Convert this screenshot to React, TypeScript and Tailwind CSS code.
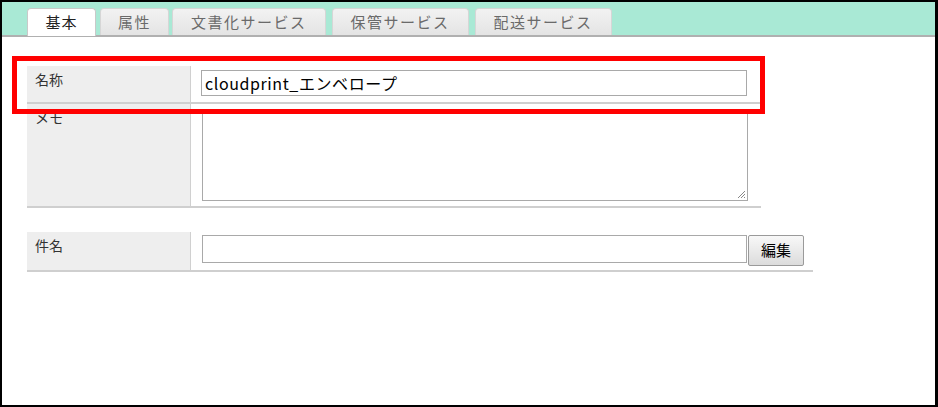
const font = { fontFamily: '"Noto Sans CJK JP", "Noto Sans", sans-serif' };

const tabs = ["基本", "属性", "文書化サービス", "保管サービス", "配送サービス"];

function Tab({ label, active, wide }: { label: string; active?: boolean; wide?: boolean }) {
  if (active) {
    return (
      <div className="-mb-px flex h-[28px] w-[69px] items-center justify-center rounded-t-[4px] border border-b-0 border-[#c9c9c9] bg-white text-[15px] tracking-[1px] text-[#222]">
        {label}
      </div>
    );
  }
  return (
    <div
      className={`flex h-[27px] items-center justify-center rounded-t-[4px] border border-b-0 border-[#d6d6d6] bg-gradient-to-b from-[#f2f2f2] to-[#e4e4e4] text-[15px] tracking-[1.5px] text-[#6a6a6a] ${
        wide ? "px-[18px]" : "px-[17px]"
      }`}
    >
      {label}
    </div>
  );
}

function Row({
  label,
  children,
  className,
}: {
  label: string;
  children: React.ReactNode;
  className?: string;
}) {
  return (
    <div className={`flex border-b-2 border-[#cfcfcf] ${className ?? ""}`}>
      <div className="w-[164px] shrink-0 border-r border-[#d0d0d0] bg-[#eeeeee] px-[8px] pt-[3px] text-[14px] text-[#333]">
        {label}
      </div>
      <div className="flex-1">{children}</div>
    </div>
  );
}

export default function App() {
  return (
    <div
      className="relative box-border h-[407px] w-[938px] overflow-hidden border-2 border-r-[3px] border-black bg-white"
      style={font}
    >
      <div className="flex h-[35px] items-end gap-[4px] border-b-2 border-[#b0b0b0] bg-[#a9e9d5] pl-[25px]">
        <Tab label={tabs[0]} active />
        <Tab label={tabs[1]} />
        <div className="ml-[-1px] flex gap-[6px]">
          <Tab label={tabs[2]} wide />
          <Tab label={tabs[3]} wide />
          <Tab label={tabs[4]} wide />
        </div>
      </div>

      <div className="pl-[25px] pt-[29px]">
        <div className="w-[734px]">
          <Row label="名称" className="h-[38px]">
            <div className="pl-[10px] pt-[4px]">
              <div className="flex h-[26px] w-[546px] items-center border border-[#a9a9a9] bg-white pl-[3px] text-[16px] tracking-[0.6px] text-black">
                cloudprint_エンベロープ
              </div>
            </div>
          </Row>
          <Row label="メモ" className="h-[104px]">
            <div className="pl-[11px] pt-[6px]">
              <div className="relative h-[91px] w-[546px] border border-[#a9a9a9] bg-white">
                <svg className="absolute bottom-[1px] right-[1px]" width="10" height="10" viewBox="0 0 10 10">
                  <path d="M9 2 L2 9 M9 5 L5 9 M9 8 L8 9" stroke="#888" strokeWidth="1" fill="none" />
                </svg>
              </div>
            </div>
          </Row>
        </div>

        <div className="mt-[24px] w-[786px]">
          <Row label="件名" className="h-[40px]">
            <div className="flex pl-[11px] pt-[3px]">
              <div className="h-[28px] w-[545px] border border-[#a9a9a9] bg-white" />
              <button className="ml-[1px] h-[31px] w-[56px] rounded-[2px] border border-[#9a9a9a] bg-gradient-to-b from-[#f8f8f8] to-[#dcdcdc] text-[15px] text-black">
                編集
              </button>
            </div>
          </Row>
        </div>
      </div>

      <div className="pointer-events-none absolute left-[10px] top-[54px] h-[58px] w-[753px] border-[5px] border-[#ff0000]" />
    </div>
  );
}
